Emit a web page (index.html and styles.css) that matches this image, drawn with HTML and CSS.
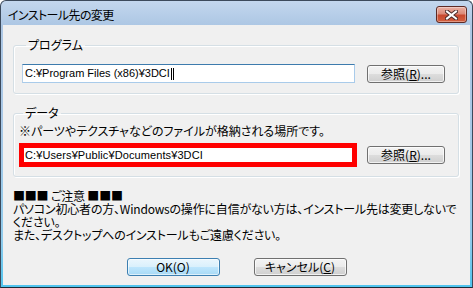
FILE: index.html
```html
<!DOCTYPE html>
<html lang="ja">
<head>
<meta charset="utf-8">
<title>インストール先の変更</title>
<link rel="stylesheet" href="styles.css">
</head>
<body>
<div class="window">
  <div class="titlebar">
    <span class="title">インストール先の変更</span>
    <button class="close" aria-label="閉じる">
      <svg width="13" height="10" viewBox="0 0 13 10">
        <path d="M2 1.5 L11 8.5 M11 1.5 L2 8.5" stroke="#4a2a28" stroke-width="4" stroke-linecap="square"/>
        <path d="M2 1.5 L11 8.5 M11 1.5 L2 8.5" stroke="#ffffff" stroke-width="2" stroke-linecap="square"/>
      </svg>
    </button>
  </div>
  <div class="client">
    <fieldset class="group g1">
      <legend>プログラム</legend>
      <div class="row">
        <div class="textbox focus">C:¥Program Files (x86)¥3DCI<span class="caret"></span></div>
        <button class="btn">参照(<u>R</u>)...</button>
      </div>
    </fieldset>
    <fieldset class="group g2">
      <legend>データ</legend>
      <p class="hint">※パーツやテクスチャなどのファイルが格納される場所です。</p>
      <div class="row">
        <div class="highlight"><div class="textbox plain">C:¥Users¥Public¥Documents¥3DCI</div></div>
        <button class="btn">参照(<u>R</u>)...</button>
      </div>
    </fieldset>
    <div class="notice">
      <p>■■■ ご注意 ■■■</p>
      <p>パソコン初心者の方、Windowsの操作に自信がない方は、インストール先は変更しないで<br>ください。</p>
      <p>また、デスクトップへのインストールもご遠慮ください。</p>
    </div>
    <div class="actions">
      <button class="btn default">OK(O)</button>
      <button class="btn">キャンセル(<u>C</u>)</button>
    </div>
  </div>
</div>
</body>
</html>
```

FILE: styles.css
```css
* { box-sizing: border-box; }
html, body {
  margin: 0;
  padding: 0;
  width: 473px;
  height: 288px;
  overflow: hidden;
  background: #ffffff;
}
body {
  font-family: "Noto Sans CJK JP", "Liberation Sans", sans-serif;
  font-size: 12px;
  font-feature-settings: "palt";
  color: #000;
}
.window {
  width: 473px;
  height: 288px;
  border: 1px solid #3c4a5c;
  border-bottom-color: #1b2a36;
  border-radius: 6px 6px 0 0;
  background: linear-gradient(to bottom, #c3d7ee 0, #adc7e4 24px, #a9c8e6 120px, #8fcbec 240px, #4fc4ee 100%);
  display: flex;
  flex-direction: column;
  padding: 0 2px 2px 2px;
}
.titlebar {
  height: 24px;
  display: flex;
  align-items: center;
  justify-content: space-between;
  padding: 0 3px 0 5px;
}
.title {
  font-size: 12px;
  line-height: 14px;
  margin-top: 4px;
  letter-spacing: -0.6px;
}
.close {
  width: 31px;
  height: 17px;
  margin-top: 3px;
  padding: 0;
  border: 1px solid #5e2a24;
  border-radius: 3px;
  background: linear-gradient(to bottom, #eab0a3 0%, #dc8a78 45%, #c9492f 55%, #d2603f 100%);
  box-shadow: inset 0 0 0 1px rgba(255,255,255,0.35);
  display: flex;
  align-items: center;
  justify-content: center;
}
.close svg { display: block; }
.client {
  flex: 1;
  background: #f0f0f0;
  display: flex;
  flex-direction: column;
  padding: 13px 11px 9px 10px;
}
.group {
  margin: 0;
  border: 1px solid #d5dfe5;
  border-radius: 3px;
  box-shadow: inset 1px 1px 0 #fff, 1px 1px 0 #fff;
  min-width: 0;
}
.group legend {
  padding: 0 2px;
  margin-left: 4px;
  line-height: 14px;
}
.g1 { padding: 12px 0 10px 8px; }
.g2 { margin-top: 12px; padding: 4px 0 9px 5px; }
.row {
  display: flex;
  align-items: center;
}
.textbox {
  background: #fff;
  font-family: "Liberation Sans", "Noto Sans CJK JP", sans-serif;
  font-size: 11px;
  line-height: 13px;
  padding: 2px 2px;
  white-space: nowrap;
  display: flex;
  align-items: center;
}
.focus {
  width: 333px;
  height: 19px;
  border: 1px solid #a9cbea;
  border-top-color: #3d7bad;
  border-left-color: #b5cfe7;
}
.caret {
  display: inline-block;
  width: 3px;
  height: 12px;
  margin-left: 1px;
  border-left: 1px solid #000;
  border-right: 1px solid #000;
  background: #fff;
}
.highlight {
  width: 338px;
  height: 24px;
  border: 5px solid #ff0000;
  background: #fff;
}
.plain {
  height: 14px;
  padding: 0 1px;
  letter-spacing: 0.1px;
}
.g1 .btn { margin-left: 12px; }
.g2 .btn { margin-left: 10px; }
.hint {
  margin: 0 0 5px 0;
  line-height: 14px;
}
.btn {
  width: 78px;
  height: 18px;
  padding: 0;
  border: 1px solid #707070;
  border-radius: 3px;
  background: linear-gradient(to bottom, #f3f3f3 0%, #ebebeb 50%, #dddddd 50%, #cfcfcf 100%);
  box-shadow: inset 0 0 0 1px rgba(255,255,255,0.7);
  font-family: "Noto Sans CJK JP", "Liberation Sans", sans-serif;
  font-size: 12px;
  font-feature-settings: "palt";
  line-height: 14px;
  color: #000;
}
.btn u { text-underline-offset: 1px; }
.notice {
  margin-top: 12px;
  line-height: 13px;
}
.notice p {
  margin: 0;
  white-space: nowrap;
  letter-spacing: -0.2px;
}
.actions {
  margin-top: auto;
  display: flex;
  justify-content: center;
  gap: 34px;
  padding-left: 1px;
}
.actions .btn {
  width: 93px;
}
.btn.default {
  border-color: #3c7fb1;
  background: linear-gradient(to bottom, #eaf6fd 0%, #d9f0fc 50%, #bee6fd 50%, #a7d9f5 100%);
  box-shadow: inset 0 0 0 1px rgba(255,255,255,0.6);
}
```
